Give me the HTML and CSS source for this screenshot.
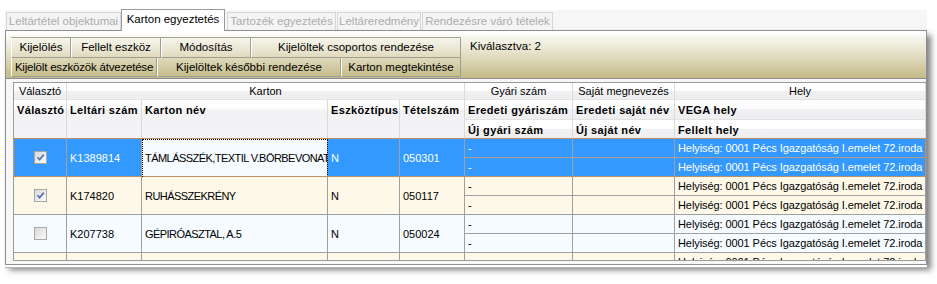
FILE: index.html
```html
<!DOCTYPE html>
<html lang="hu">
<head>
<meta charset="utf-8">
<title>Karton egyeztetés</title>
<link rel="stylesheet" href="styles.css">
</head>
<body>
<div class="window">
  <div class="tabs">
    <div class="tab t1">Leltártétel objektumai</div>
    <div class="tab t2 active">Karton egyeztetés</div>
    <div class="tab t3">Tartozék egyeztetés</div>
    <div class="tab t4">Leltáreredmény</div>
    <div class="tab t5">Rendezésre váró tételek</div>
  </div>
  <div class="panel">
    <div class="toolbar">
      <div class="buttons">
        <div class="brow">
          <div class="btn b1">Kijelölés</div>
          <div class="btn b2">Fellelt eszköz</div>
          <div class="btn b3">Módosítás</div>
          <div class="btn b4">Kijelöltek csoportos rendezése</div>
        </div>
        <div class="brow">
          <div class="btn b5">Kijelölt eszközök átvezetése</div>
          <div class="btn b6">Kijelöltek későbbi rendezése</div>
          <div class="btn b7">Karton megtekintése</div>
        </div>
      </div>
      <div class="count">Kiválasztva: 2</div>
    </div>
    <div class="grid-wrap">
      <div class="grid">
        <div class="gh">Választó</div>
        <div class="gh karton">Karton</div>
        <div class="gh">Gyári szám</div>
        <div class="gh">Saját megnevezés</div>
        <div class="gh">Hely</div>

        <div class="hc tall">Választó</div>
        <div class="hc tall">Leltári szám</div>
        <div class="hc tall">Karton név</div>
        <div class="hc tall">Eszköztípus</div>
        <div class="hc tall">Tételszám</div>
        <div class="hc">Eredeti gyáriszám</div>
        <div class="hc">Eredeti saját név</div>
        <div class="hc">VEGA hely</div>
        <div class="hc low">Új gyári szám</div>
        <div class="hc low">Új saját név</div>
        <div class="hc low">Fellelt hely</div>

        <!-- row 1 (selected) -->
        <div class="c main sel center"><span class="cb"><svg viewBox="0 0 11 11" width="11" height="11"><path d="M2.5 5.2 L4.6 7.6 L8.8 2.6" fill="none" stroke="#5d74b4" stroke-width="1.7"/></svg></span></div>
        <div class="c main sel">K1389814</div>
        <div class="c main odd focus name">TÁMLÁSSZÉK,TEXTIL V.BÖRBEVONAT</div>
        <div class="c main sel">N</div>
        <div class="c main sel">050301</div>
        <div class="c sub sel selsub">-</div>
        <div class="c sub sel selsub"></div>
        <div class="c sub sel selsub hely">Helyiség: 0001 Pécs Igazgatóság I.emelet 72.iroda</div>
        <div class="c sub sel">-</div>
        <div class="c sub sel"></div>
        <div class="c sub sel hely">Helyiség: 0001 Pécs Igazgatóság I.emelet 72.iroda</div>

        <!-- row 2 -->
        <div class="c main even center"><span class="cb"><svg viewBox="0 0 11 11" width="11" height="11"><path d="M2.5 5.2 L4.6 7.6 L8.8 2.6" fill="none" stroke="#5d74b4" stroke-width="1.7"/></svg></span></div>
        <div class="c main even">K174820</div>
        <div class="c main even name">RUHÁSSZEKRÉNY</div>
        <div class="c main even">N</div>
        <div class="c main even">050117</div>
        <div class="c sub even">-</div>
        <div class="c sub even"></div>
        <div class="c sub even hely">Helyiség: 0001 Pécs Igazgatóság I.emelet 72.iroda</div>
        <div class="c sub even">-</div>
        <div class="c sub even"></div>
        <div class="c sub even hely">Helyiség: 0001 Pécs Igazgatóság I.emelet 72.iroda</div>

        <!-- row 3 -->
        <div class="c main odd center"><span class="cb"></span></div>
        <div class="c main odd">K207738</div>
        <div class="c main odd name">GÉPIRÓASZTAL, A.5</div>
        <div class="c main odd">N</div>
        <div class="c main odd">050024</div>
        <div class="c sub odd">-</div>
        <div class="c sub odd"></div>
        <div class="c sub odd hely">Helyiség: 0001 Pécs Igazgatóság I.emelet 72.iroda</div>
        <div class="c sub odd">-</div>
        <div class="c sub odd"></div>
        <div class="c sub odd hely">Helyiség: 0001 Pécs Igazgatóság I.emelet 72.iroda</div>

        <!-- row 4 (partially visible) -->
        <div class="c main even"></div>
        <div class="c main even"></div>
        <div class="c main even"></div>
        <div class="c main even"></div>
        <div class="c main even"></div>
        <div class="c sub even"></div>
        <div class="c sub even"></div>
        <div class="c sub even hely">Helyiség: 0001 Pécs Igazgatóság I.emelet 72.iroda</div>
        <div class="c sub even"></div>
        <div class="c sub even"></div>
        <div class="c sub even hely">Helyiség: 0001 Pécs Igazgatóság I.emelet 72.iroda</div>

        <div class="focus-rect"></div>
      </div>
    </div>
  </div>
</div>
</body>
</html>
```

FILE: styles.css
```css
html, body {
  margin: 0;
  padding: 0;
  background: #ffffff;
}
body {
  width: 937px;
  height: 284px;
  overflow: hidden;
  font-family: "Liberation Sans", Arial, sans-serif;
  font-size: 11px;
  color: #000;
}

.window {
  margin: 10px 0 0 5px;
  width: 922px;
}

/* ---------- tabs ---------- */
.tabs {
  display: flex;
  align-items: flex-end;
  height: 20px;
  padding-left: 1px;
  background: #f6f6f6;
}
.tab {
  box-sizing: border-box;
  height: 18px;
  line-height: 17px;
  text-align: center;
  white-space: nowrap;
  color: #acacac;
  background: #f4f4f4;
  border: 1px solid #d6d6d6;
  border-bottom: none;
  font-size: 11.5px;
}
.tab.active {
  position: relative;
  z-index: 2;
  height: 22px;
  line-height: 19px;
  margin-bottom: -1px;
  color: #000;
  background: #ffffff;
  border-color: #9a9a9a;
}
.t1 { width: 115px; }
.t2 { width: 104px; margin-right: 2px; }
.t3 { width: 109px; margin-right: 1px; }
.t4 { width: 84px; margin-right: 1px; }
.t5 { width: 131px; }

/* ---------- panel ---------- */
.panel {
  box-sizing: border-box;
  height: 235px;
  background: #f7f7f7;
  border: 1px solid #8e8e92;
  box-shadow: 0 2px 0 #ffffff, 0 3px 0 #b4b4b4, 4px 5px 6px rgba(0, 0, 0, 0.5);
}

.toolbar {
  box-sizing: border-box;
  height: 48px;
  padding: 6px 0 0 5px;
  display: flex;
  background: linear-gradient(to bottom, #ffffff 0, #ffffff 3px, #f9f8f1 5px, #e6e2cb 45%, #c3ba86 100%);
  border-bottom: 1px solid #8e8e94;
}
.buttons {
  display: flex;
  flex-direction: column;
  border-top: 1px solid #a6a49a;
}
.brow {
  display: flex;
}
.brow:first-child .btn { height: 20px; line-height: 19px; }
.btn {
  box-sizing: border-box;
  height: 19px;
  line-height: 18px;
  text-align: center;
  white-space: nowrap;
  font-size: 11.5px;
  border-left: 1px solid #ffffff;
  border-right: 1px solid #a09e92;
  border-bottom: 1px solid #a09e92;
}
.b1 { width: 60px; }
.b2 { width: 90px; }
.b3 { width: 90px; }
.b4 { width: 210px; }
.b5 { width: 146px; letter-spacing: -0.2px; }
.b6 { width: 184px; }
.b7 { width: 120px; }
.count {
  margin-left: 9px;
  padding-top: 3px;
  font-size: 11.5px;
}

/* ---------- grid ---------- */
.grid-wrap {
  box-sizing: border-box;
  margin: 3px 0 0 7px;
  height: 179px;
  width: 913px;
  overflow: hidden;
  border: 1px solid #9c9c9c;
  border-right: none;
  background: #ffffff;
}
.grid {
  position: relative;
  display: grid;
  grid-template-columns: 53px 75px 186px 72px 65px 108px 102px 251px;
  grid-template-rows: 17px 20px 19px;
  grid-auto-rows: 19px;
}

.gh, .hc {
  box-sizing: border-box;
  white-space: nowrap;
  overflow: hidden;
  background: linear-gradient(to bottom, #ffffff 0, #fdfdfd 48%, #f1f1f3 50%, #eeeef0 100%);
  border-right: 1px solid #dadada;
  border-bottom: 1px solid #e2e2e2;
}
.gh {
  text-align: center;
  line-height: 16px;
}
.karton { grid-column: span 4; }
.hc {
  font-weight: bold;
  padding: 0 3px;
  line-height: 21px;
  letter-spacing: 0.35px;
}
.hc.tall {
  grid-row: span 2;
  border-bottom-color: #a0a0a0;
  background: linear-gradient(to bottom, #ffffff 0, #fdfdfd 24%, #f2f2f4 26%, #f3f3f5 100%);
}
.hc.low {
  border-bottom-color: #a0a0a0;
  line-height: 20px;
}

.c {
  box-sizing: border-box;
  display: flex;
  align-items: center;
  padding: 0 3px;
  white-space: nowrap;
  overflow: hidden;
  border-right: 1px solid #a0a0a0;
  border-bottom: 1px solid #a0a0a0;
}
.c.main { grid-row: span 2; }
.c.center { justify-content: center; }
.name { letter-spacing: -0.55px; }
.hely { letter-spacing: -0.08px; }
.odd { background: #f5fbff; }
.even { background: #fef8e8; }
.sel { background: #3399ff; color: #ffffff; }
.selsub { border-bottom-color: #b89c80; }
.focus {
  outline: 1px dotted #000000;
  outline-offset: -1px;
}

.focus-rect {
  position: absolute;
  top: -1px;
  left: 0;
  right: 0;
  bottom: 0;
  grid-row: 4 / span 2;
  grid-column: 1 / -1;
  z-index: 3;
  pointer-events: none;
  border: 1px dotted #d9822b;
}

.cb {
  box-sizing: border-box;
  width: 13px;
  height: 13px;
  display: flex;
  align-items: center;
  justify-content: center;
  border: 1px solid #a7a7a7;
  background: linear-gradient(135deg, #d8d8d8 0, #eeeeee 60%, #fbfbfb 100%);
  margin-left: 1px;
}
.cb svg { display: block; }
```
